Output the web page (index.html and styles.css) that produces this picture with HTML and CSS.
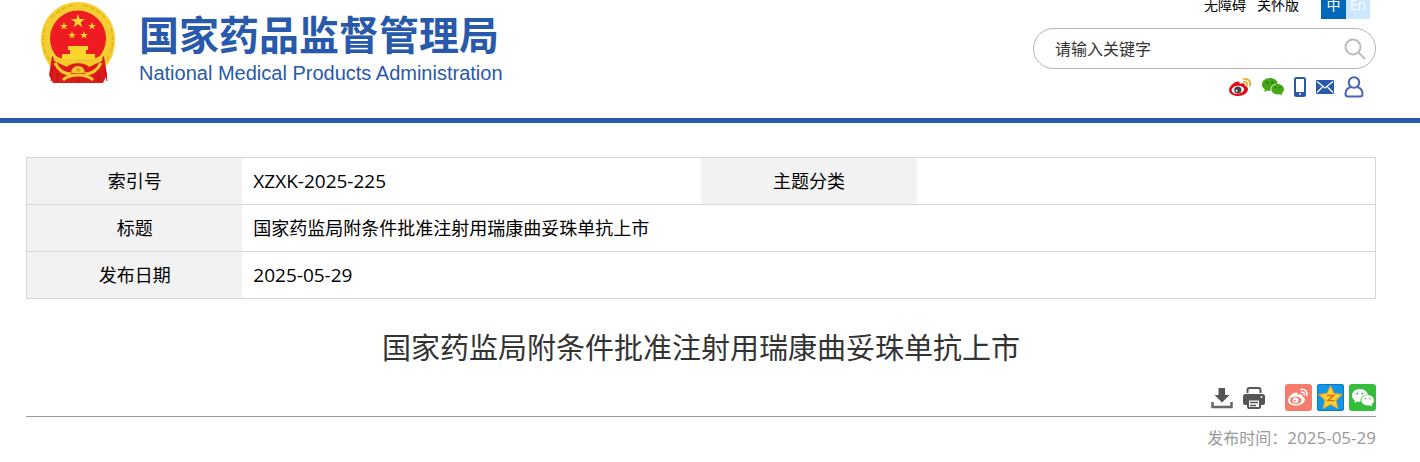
FILE: index.html
```html
<!DOCTYPE html>
<html lang="zh-CN">

<head>
  <meta charset="UTF-8" />
  <meta name="viewport" content="width=device-width, initial-scale=1.0" />
  <title>国家药监局附条件批准注射用瑞康曲妥珠单抗上市</title>
  <link rel="stylesheet" href="styles.css">
</head>

<body>
  <!-- shared icon shapes -->
  <svg class="defs" aria-hidden="true">
    <symbol id="star" viewBox="0 0 20 20">
      <path d="M10 0l2.4 7.2H20l-6.1 4.5 2.3 7.3L10 14.6 3.8 19l2.3-7.3L0 7.2h7.6z" />
    </symbol>
    <symbol id="wechat" viewBox="0 0 22 18">
      <path d="M8 0C3.400 0 0 2.900 0 6.500c0 2.100 1.100 3.900 2.900 5.100L2.200 14l2.700-1.400c1 .3 2 .4 3.100.4h.6C7.800 9 11 5.600 15.900 5.500 15 2.200 11.900 0 8 0z" />
      <path d="M22 11.300c0-2.900-2.900-5.200-6.300-5.200s-6.300 2.300-6.300 5.200 2.800 5.200 6.300 5.200c.8 0 1.500-.1 2.200-.3l2.300 1.300-.6-2.100c1.500-1 2.400-2.400 2.400-4.100z" />
      <g class="eye">
        <circle cx="5.300" cy="4.500" r="1" />
        <circle cx="10.300" cy="4.500" r="1" />
        <circle cx="13.600" cy="9.800" r=".8" />
        <circle cx="17.800" cy="9.800" r=".8" />
      </g>
    </symbol>
  </svg>

  <header>
    <a class="logo" href="#">
      <svg class="emblem" viewBox="0 0 76 82" role="img" aria-label="国徽">
        <path d="M38 0C17 0 1 17 1 37c0 13 5 23 11 29l52 0c7-6 11-16 11-29C75 17 59 0 38 0z" fill="#f5cf32" />
        <path d="M5 26c-4 16 0 29 9 37M71 26c4 16 0 29-9 37M11 16C17 9 26 4 35 3M65 16C59 9 50 4 41 3" fill="none" stroke="#e3b21d" stroke-width="1.500" stroke-dasharray="5 2" />
        <circle cx="38" cy="36.500" r="28" fill="#ee1c22" />
        <g fill="#fbd42c">
          <use href="#star" x="31" y="12" width="14" height="14" />
          <use href="#star" x="20" y="20" width="8" height="8" />
          <use href="#star" x="48" y="20" width="8" height="8" />
          <use href="#star" x="28" y="29" width="8" height="8" />
          <use href="#star" x="40" y="29" width="8" height="8" />
          <path d="M28 44h20v4h-2v4h9v5H22v-5h8v-4h-2z" />
        </g>
        <path d="M12 54l10 7h32l10-7 3 19-4 8H13l-4-8z" fill="#dc1b1d" />
        <path d="M13 53l10 4h30l10-4-1 6-13 6c-4-5-18-5-22 0l-13-6z" fill="#f3c92b" />
        <path d="M31 71a7 7 0 0 1 14 0z" fill="#f3c92b" />
        <circle cx="38" cy="68" r="2" fill="#df9d1b" />
        <path d="M15 61c4 8 10 11 16 11M61 61c-4 8-10 11-16 11M23 78c4-4 9-5 15-5s11 1 15 5" fill="none" stroke="#f3c92b" stroke-width="3" />
        <path d="M13 66l-2 13M65 66l2 13M18 71l-1 9M58 71l1 9M38 76v5" stroke="#b51013" stroke-width="1" />
      </svg>
      <span class="logo-text">
        <span class="logo-cn">国家药品监督管理局</span>
        <span class="logo-en">National Medical Products Administration</span>
      </span>
    </a>

    <div class="tools">
      <nav class="top-links">
        <a href="#">无障碍</a>
        <a href="#">关怀版</a>
        <span class="lang">
          <a class="active" href="#">中</a><a href="#">En</a>
        </span>
      </nav>
      <form class="search">
        <input type="text" aria-label="关键字" placeholder="请输入关键字" />
        <button type="submit" aria-label="搜索">
          <svg viewBox="0 0 22 22" width="22" height="22" fill="none" stroke="#bcbcbc" stroke-width="2">
            <circle cx="9" cy="9" r="7.500" />
            <path d="M14.500 14.500L21 21" />
          </svg>
        </button>
      </form>
      <div class="social">
        <a href="#" aria-label="微博">
          <svg viewBox="0 0 23 20" width="23" height="20">
            <path d="M9 4.500c2 0 2 1.200 1.500 2.600 3-1.300 6-1.200 5.300 1.600 2 .6 3.200 1.600 3.200 3.300 0 4-4.600 7-9.900 7C4 19 0 16.600 0 13c0-3.500 5.500-8.500 9-8.500z" fill="#e00b14" />
            <ellipse cx="8.800" cy="12.800" rx="6.300" ry="4" fill="#fff" transform="rotate(-7 8.800 12.800)" />
            <circle cx="8.800" cy="13" r="3.600" fill="#4b4444" />
            <circle cx="7.600" cy="13.800" r="1" fill="#fff" />
            <path d="M14.500 2c4.600-1 7.800 2.500 6.400 6.800M15 5c2.300-.5 3.700 1.200 3 3.200" fill="none" stroke="#eda81f" stroke-width="1.700" stroke-linecap="round" />
          </svg>
        </a>
        <a class="wechat" href="#" aria-label="微信">
          <svg width="22" height="18"><use href="#wechat" /></svg>
        </a>
        <a href="#" aria-label="手机">
          <svg viewBox="0 0 12 20" width="12" height="20">
            <rect x="1" y="1" width="10" height="18" rx="1.500" fill="#fff" stroke="#2859ab" stroke-width="2" />
            <path d="M1 15h10v4H1z" fill="#2859ab" />
            <circle cx="6" cy="17" r="1" fill="#fff" />
          </svg>
        </a>
        <a href="#" aria-label="邮箱">
          <svg viewBox="0 0 18 14" width="18" height="14">
            <rect width="18" height="14" rx="1" fill="#2859ab" />
            <path d="M1 1.500l8 6.500 8-6.500M1 12.500l5.500-5.500M17 12.500L11.500 7" fill="none" stroke="#fff" stroke-width="1.300" />
          </svg>
        </a>
        <a href="#" aria-label="个人中心">
          <svg viewBox="0 0 20 22" width="20" height="22" fill="none" stroke="#4765b3" stroke-width="2">
            <circle cx="10" cy="6.500" r="5.200" />
            <path d="M6.500 11C3.500 12 1.500 14.500 1.500 18c0 1.500.8 2.500 2.500 2.500h12c1.700 0 2.500-1 2.500-2.500 0-3.500-2-6-5-7" />
          </svg>
        </a>
      </div>
    </div>
  </header>

  <main>
    <table>
      <tr>
        <th scope="row">索引号</th>
        <td class="num">XZXK-2025-225</td>
        <th scope="row">主题分类</th>
        <td></td>
      </tr>
      <tr>
        <th scope="row">标题</th>
        <td colspan="3">国家药监局附条件批准注射用瑞康曲妥珠单抗上市</td>
      </tr>
      <tr>
        <th scope="row">发布日期</th>
        <td class="num" colspan="3">2025-05-29</td>
      </tr>
    </table>

    <h1>国家药监局附条件批准注射用瑞康曲妥珠单抗上市</h1>

    <div class="actions">
      <button type="button" aria-label="下载">
        <svg viewBox="0 0 22 22" width="22" height="22" fill="#555">
          <path d="M7.500 1h6.500v7h4.500L11 15.500 3.500 8h4z" />
          <path d="M1.500 15v5h19v-5" fill="none" stroke="#666" stroke-width="2.500" />
        </svg>
      </button>
      <button type="button" aria-label="打印">
        <svg viewBox="0 0 22 22" width="22" height="22">
          <path d="M4.500 6V3q0-2 2-2h9q2 0 2 2v3" fill="#fff" stroke="#555" stroke-width="2" />
          <rect y="7" width="22" height="11" rx="2.500" fill="#555" />
          <circle cx="18.500" cy="10" r="1" fill="#fff" />
          <rect x="5" y="12.500" width="12" height="8.500" rx="1" fill="#fff" stroke="#555" stroke-width="2" />
          <path d="M7 15.500h8M7 18.500h6" stroke="#555" stroke-width="1.500" />
        </svg>
      </button>
      <div class="share">
        <a class="share-weibo" href="#" aria-label="分享到微博">
          <svg viewBox="0 0 21 19" width="21" height="19">
            <path d="M8 4.500c2 0 1.900 1.300 1.400 2.500 2.700-1.200 5.400-1 4.700 1.500 1.800.5 2.800 1.500 2.800 3 0 3.600-4.200 6-8.800 6-4.600 0-8.100-2-8.100-5.300 0-3.200 4.800-7.700 8-7.700z" fill="#fff" />
            <ellipse cx="7.800" cy="12.200" rx="5.700" ry="3.800" fill="#f87c6b" />
            <circle cx="7.500" cy="12.300" r="2.800" fill="#fff" />
            <circle cx="6.800" cy="12.800" r="1" fill="#f87c6b" />
            <path d="M13 1.500c4-.8 6.700 2 5.600 6M13.500 4.300c2-.4 3.200 1 2.600 2.800" fill="none" stroke="#fff" stroke-width="1.500" stroke-linecap="round" />
          </svg>
        </a>
        <a class="share-qzone" href="#" aria-label="分享到QQ空间">
          <svg viewBox="0 0 24 24" width="25" height="25">
            <path d="M12 1l3.300 7.200 7.700.9-5.700 5.300 1.500 7.900L12 18.500l-6.800 3.800 1.500-7.900L1 9.100l7.700-.9z" fill="#ffcf33" stroke="#f0a824" stroke-width="1" stroke-linejoin="round" />
            <path d="M8.500 10h6.500L9.500 15h6.500" fill="none" stroke="#c9741a" stroke-width="1.400" />
          </svg>
        </a>
        <a class="share-wechat" href="#" aria-label="分享到微信">
          <svg width="22" height="18"><use href="#wechat" /></svg>
        </a>
      </div>
    </div>

    <p class="pub">发布时间：<time datetime="2025-05-29">2025-05-29</time></p>
  </main>
</body>

</html>
```
FILE: styles.css
```css
body {
  margin: 0;
  background: #fff;
  color: #000;
  font-family: "Open Sans", "Noto Sans CJK SC", sans-serif;
}

a {
  color: inherit;
  text-decoration: none;
}

svg {
  display: block;
}

button {
  padding: 0;
  border: 0;
  background: none;
  cursor: pointer;
}

.defs {
  position: absolute;
  width: 0;
  height: 0;
}

header {
  display: flex;
  justify-content: space-between;
  height: 118px;
  padding: 0 44px 0 40px;
  border-bottom: 5px solid #2859ab;
}

.logo {
  display: flex;
  align-items: flex-start;
  gap: 23px;
  padding-top: 2px;
  color: #2859ab;
}

.emblem {
  width: 76px;
  height: 82px;
}

.logo-text {
  display: flex;
  flex-direction: column;
  padding-top: 7px;
  white-space: nowrap;
}

.logo-cn {
  font: bold 40px/48px "Noto Sans CJK SC", sans-serif;
}

.logo-en {
  font: 20px/32px "Liberation Sans", sans-serif;
}

.tools {
  display: flex;
  flex-direction: column;
  align-items: flex-end;
}

.top-links {
  display: flex;
  gap: 11px;
  height: 19px;
  margin-right: 6px;
  font-size: 14px;
  line-height: 10px;
}

.lang {
  display: flex;
  margin-left: 11px;
  color: #fff;
}

.lang a {
  width: 24px;
  background: #cce8ff;
  text-align: center;
}

.lang .active {
  width: 25px;
  background: #0068b7;
}

.search {
  display: flex;
  align-items: center;
  box-sizing: border-box;
  width: 343px;
  height: 41px;
  margin-top: 9px;
  padding: 0 9px 0 21px;
  border: 1px solid #b5b5b5;
  border-radius: 21px;
}

.search input {
  flex: 1;
  min-width: 0;
  padding: 0;
  border: 0;
  outline: 0;
  background: none;
  font: 16px/24px "Open Sans", "Noto Sans CJK SC", sans-serif;
}

.search input::placeholder {
  color: #333;
}

.social {
  display: flex;
  align-items: center;
  gap: 10px;
  margin: 7px 12px 0 0;
}

.wechat {
  --eye: #17610a;
  fill: #43a716;
}

.eye {
  fill: var(--eye);
}

main {
  padding: 34px 44px 12px 26px;
}

table {
  width: 100%;
  border: 1px solid #d7d7d7;
  border-collapse: collapse;
  table-layout: fixed;
  font-size: 18px;
  line-height: 26px;
}

tr {
  border-bottom: 1px solid #d7d7d7;
}

th,
td {
  height: 26px;
  padding: 10px 11px;
  text-align: left;
}

th {
  width: 16%;
  box-sizing: border-box;
  padding: 10px 0;
  background: #f2f2f2;
  font-weight: normal;
  text-align: center;
}

.num {
  font-size: 19px;
}

h1 {
  margin: 27px 0 14px;
  color: #333;
  font-size: 29px;
  font-weight: normal;
  line-height: 44px;
  text-align: center;
}

.actions {
  display: flex;
  align-items: center;
  justify-content: flex-end;
  gap: 10px;
  padding-bottom: 5px;
  border-bottom: 1px solid #999;
}

.share {
  display: flex;
  gap: 5px;
  margin-left: 10px;
}

.share a {
  display: flex;
  align-items: center;
  justify-content: center;
  width: 27px;
  height: 27px;
  border-radius: 3px;
}

.share-weibo {
  background: #f87c6b;
}

.share-qzone {
  background: #1296e6;
  box-shadow: inset 0 0 0 1px #0a79c6;
}

.share-wechat {
  --eye: #35bd3c;
  background: #35bd3c;
  fill: #fff;
}

.pub {
  margin: 9px 0 0;
  color: #999;
  font-size: 16px;
  line-height: 24px;
  text-align: right;
}

.pub time {
  font-size: 17px;
}
```
